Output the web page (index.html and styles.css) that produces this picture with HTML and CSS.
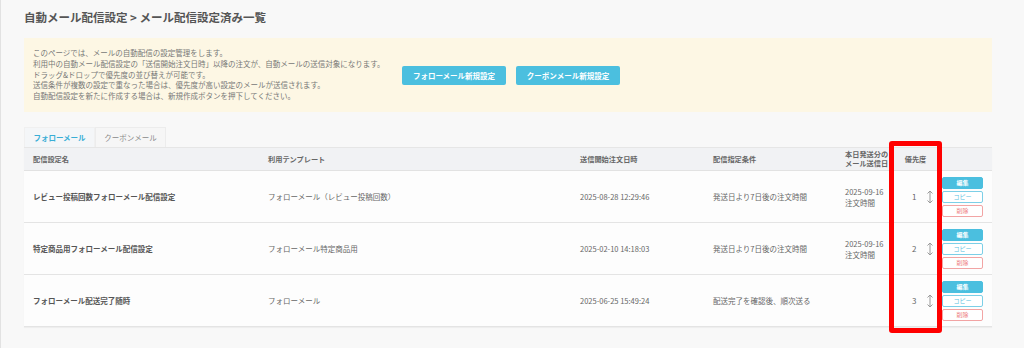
FILE: index.html
```html
<!DOCTYPE html>
<html lang="ja">
<head>
    <meta charset="UTF-8">
    <meta name="viewport" content="width=device-width, initial-scale=1.0">
    <title>メール配信設定済み一覧</title>
    <link rel="stylesheet" href="styles.css">
</head>
<body>
    <div class="page">
        <h1 class="page-title">自動メール配信設定 &gt; メール配信設定済み一覧</h1>

        <div class="notice">
            <div class="notice-text">
                <p>このページでは、メールの自動配信の設定管理をします。</p>
                <p>利用中の自動メール配信設定の「送信開始注文日時」以降の注文が、自動メールの送信対象になります。</p>
                <p>ドラッグ&amp;ドロップで優先度の並び替えが可能です。</p>
                <p>送信条件が複数の設定で重なった場合は、優先度が高い設定のメールが送信されます。</p>
                <p>自動配信設定を新たに作成する場合は、新規作成ボタンを押下してください。</p>
            </div>
            <div class="notice-actions">
                <button class="btn-new">フォローメール新規設定</button>
                <button class="btn-new">クーポンメール新規設定</button>
            </div>
        </div>

        <div class="list-wrap">
            <div class="tabs">
                <div class="tab active">フォローメール</div>
                <div class="tab">クーポンメール</div>
            </div>

            <table class="list">
                <colgroup>
                    <col style="width:235px">
                    <col style="width:312px">
                    <col style="width:133px">
                    <col style="width:132px">
                    <col style="width:58px">
                    <col style="width:43px">
                    <col>
                </colgroup>
                <thead>
                    <tr>
                        <th>配信設定名</th>
                        <th>利用テンプレート</th>
                        <th>送信開始注文日時</th>
                        <th>配信指定条件</th>
                        <th class="two-line">本日発送分の<br>メール送信日</th>
                        <th class="center">優先度</th>
                        <th></th>
                    </tr>
                </thead>
                <tbody>
                    <tr>
                        <td class="name">レビュー投稿回数フォローメール配信設定</td>
                        <td>フォローメール（レビュー投稿回数）</td>
                        <td>2025-08-28 12:29:46</td>
                        <td>発送日より7日後の注文時間</td>
                        <td class="two-line">2025-09-16<br>注文時間</td>
                        <td class="priority"><span>1</span><svg class="sort" width="8" height="14" viewBox="0 0 8 14"><path d="M4 1v12M1.5 3.5 4 1l2.5 2.5M1.5 10.5 4 13l2.5-2.5" fill="none" stroke="#9a9a9a" stroke-width="1"/></svg></td>
                        <td class="actions"><button class="btn-s edit">編集</button><button class="btn-s copy">コピー</button><button class="btn-s del">削除</button></td>
                    </tr>
                    <tr>
                        <td class="name">特定商品用フォローメール配信設定</td>
                        <td>フォローメール特定商品用</td>
                        <td>2025-02-10 14:18:03</td>
                        <td>発送日より7日後の注文時間</td>
                        <td class="two-line">2025-09-16<br>注文時間</td>
                        <td class="priority"><span>2</span><svg class="sort" width="8" height="14" viewBox="0 0 8 14"><path d="M4 1v12M1.5 3.5 4 1l2.5 2.5M1.5 10.5 4 13l2.5-2.5" fill="none" stroke="#9a9a9a" stroke-width="1"/></svg></td>
                        <td class="actions"><button class="btn-s edit">編集</button><button class="btn-s copy">コピー</button><button class="btn-s del">削除</button></td>
                    </tr>
                    <tr>
                        <td class="name">フォローメール配送完了随時</td>
                        <td>フォローメール</td>
                        <td>2025-06-25 15:49:24</td>
                        <td>配送完了を確認後、順次送る</td>
                        <td></td>
                        <td class="priority"><span>3</span><svg class="sort" width="8" height="14" viewBox="0 0 8 14"><path d="M4 1v12M1.5 3.5 4 1l2.5 2.5M1.5 10.5 4 13l2.5-2.5" fill="none" stroke="#9a9a9a" stroke-width="1"/></svg></td>
                        <td class="actions"><button class="btn-s edit">編集</button><button class="btn-s copy">コピー</button><button class="btn-s del">削除</button></td>
                    </tr>
                </tbody>
            </table>

            <!-- annotation box around the priority column -->
            <div class="highlight"></div>
        </div>
    </div>
</body>
</html>
```

FILE: styles.css
```css
body {
    margin: 0;
    background: #f8f8f8;
    font-family: "Noto Sans CJK JP", "Noto Sans", sans-serif;
    color: #555;
}
.page {
    border-left: 1px solid #e2e2e2;
    padding: 8px 32px 20px 23px;
    min-height: 320px;
}
.page-title {
    margin: 0;
    font-size: 11.5px;
    line-height: 18px;
    font-weight: bold;
    color: #555;
}
.notice {
    display: flex;
    align-items: center;
    margin-top: 12px;
    padding: 10px 9px;
    background: #fdf7e4;
    height: 54px;
}
.notice-text {
    flex: 0 0 369px;
    font-size: 7.5px;
    line-height: 10.8px;
    color: #777;
}
.notice-text p {
    margin: 0;
    white-space: nowrap;
}
.notice-actions {
    display: flex;
    gap: 10px;
}
.btn-new {
    height: 19px;
    padding: 0 10px;
    border: none;
    border-radius: 2px;
    background: #4bbfdf;
    color: #fff;
    font-family: inherit;
    font-size: 7.5px;
    font-weight: bold;
    width: 104px;
}
.list-wrap {
    position: relative;
    margin-top: 15px;
}
.tabs {
    display: flex;
    height: 20px;
}
.tab {
    width: 71px;
    box-sizing: border-box;
    font-size: 7.5px;
    line-height: 20px;
    text-align: center;
    color: #8a8a8a;
    background: #f6f6f6;
    border: 1px solid #ececec;
    border-bottom: none;
}
.tab.active {
    color: #39aed6;
    font-weight: bold;
    background: #f4f6f8;
    border-color: #f0f0f0;
}
.list {
    width: 968px;
    table-layout: fixed;
    border-collapse: collapse;
    background: #fdfdfd;
    box-shadow: 0 1px 1px rgba(0,0,0,0.04);
    font-size: 7.5px;
    color: #666;
}
.list th {
    height: 22px;
    padding: 0 0 0 9px;
    background: #f1f2f4;
    border-top: 1px solid #e6e6e6;
    border-bottom: 1px solid #e2e2e2;
    text-align: left;
    font-size: 7.2px;
    font-weight: bold;
    color: #666;
    line-height: 9px;
    white-space: nowrap;
}
.list th.center {
    text-align: center;
    padding: 0;
}
.list td {
    height: 51px;
    padding: 0 0 0 9px;
    border-bottom: 1px solid #e4e4e4;
    line-height: 11px;
}
.list td.name {
    font-weight: bold;
    color: #555;
}
.list td.priority {
    padding: 0 0 0 18px;
    color: #666;
    font-size: 8px;
}
.priority span {
    display: inline-block;
    vertical-align: middle;
    margin-right: 10px;
}
.sort {
    vertical-align: middle;
}
.list td.actions {
    padding: 0 0 0 5px;
}
.btn-s {
    display: block;
    width: 41px;
    height: 12px;
    margin: 2px 0;
    padding: 0;
    border: 1px solid #7ccfe7;
    border-radius: 2px;
    background: #fff;
    color: #59bfe0;
    font-family: inherit;
    font-size: 6px;
    line-height: 10px;
}
.btn-s.edit {
    background: #4bbfdf;
    border-color: #4bbfdf;
    color: #fff;
    font-weight: bold;
}
.btn-s.del {
    border-color: #f2a4a4;
    color: #ee8080;
}
.highlight {
    position: absolute;
    left: 865px;
    top: 14px;
    width: 43px;
    height: 182px;
    border: 5px solid #ff0000;
    border-radius: 3px;
}
```
